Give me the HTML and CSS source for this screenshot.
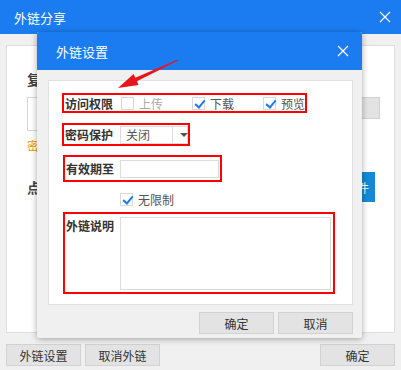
FILE: index.html
```html
<!DOCTYPE html>
<html lang="zh-CN">
<head>
<meta charset="UTF-8">
<title>外链分享</title>
<link rel="stylesheet" href="styles.css">
</head>
<body>
  <div class="win">
    <div class="win-title">
      <span>外链分享</span>
      <svg class="close" width="12" height="12" viewBox="0 0 12 12"><path d="M1 1L11 11M11 1L1 11"/></svg>
    </div>
    <div class="win-body">
      <div class="share-panel">
        <div class="share-label">复制链接</div>
        <div class="link-row">
          <div class="link-input"></div>
          <button class="btn btn-copy">复制链接</button>
        </div>
        <div class="share-tip">密码：无</div>
        <div class="open-row">
          <span class="share-label">点击打开</span>
          <button class="btn-blue">打开文件</button>
        </div>
      </div>
    </div>
    <div class="win-foot">
      <button class="btn">外链设置</button>
      <button class="btn">取消外链</button>
      <span class="spacer"></span>
      <button class="btn">确定</button>
    </div>
  </div>

  <!-- 外链设置 弹窗 -->
  <div class="modal">
    <div class="modal-title">
      <span>外链设置</span>
      <svg class="close" width="12" height="12" viewBox="0 0 12 12"><path d="M1 1L11 11M11 1L1 11"/></svg>
    </div>
    <div class="modal-body">
      <div class="form-panel">
        <div class="mark row-access">
          <span class="label">访问权限</span>
          <span class="chk"></span><span class="opt disabled">上传</span>
          <span class="chk on"></span><span class="opt">下载</span>
          <span class="chk on"></span><span class="opt">预览</span>
        </div>
        <div class="mark row-pwd">
          <span class="label">密码保护</span>
          <div class="select"><span class="select-val">关闭</span><span class="select-btn"></span></div>
        </div>
        <div class="mark row-date">
          <span class="label">有效期至</span>
          <div class="input"></div>
        </div>
        <div class="row-nolimit">
          <span class="chk on"></span><span class="opt">无限制</span>
        </div>
        <div class="mark row-desc">
          <span class="label">外链说明</span>
          <div class="textarea"></div>
        </div>
      </div>
      <div class="modal-foot">
        <button class="btn">确定</button>
        <button class="btn">取消</button>
      </div>
    </div>
  </div>

  <svg class="arrow" width="401" height="370" viewBox="0 0 401 370">
    <polygon points="118,88 133.6,74.1 135.3,77.7 177.8,59.5 178.2,60.5 136.9,81.3 138.6,84.9"/>
  </svg>
</body>
</html>
```

FILE: styles.css
```css
body {
  margin: 0;
  width: 401px;
  height: 370px;
  overflow: hidden;
  position: relative;
  background: #f0f0f0;
  font-family: "Noto Sans CJK SC", "Microsoft YaHei", sans-serif;
  font-size: 12px;
  color: #333;
}

.win {
  display: flex;
  flex-direction: column;
  height: 370px;
}

.win-title {
  height: 34px;
  flex-shrink: 0;
  background: #1b7cf1;
  color: #fff;
  font-size: 13px;
  display: flex;
  align-items: center;
  justify-content: space-between;
  padding: 0 10px 0 14px;
}

.close path {
  stroke: #fff;
  stroke-width: 1.2;
  fill: none;
}

.win-body {
  padding: 11px 6px 0 6px;
}

.share-panel {
  height: 288px;
  box-sizing: border-box;
  background: #fff;
  border: 1px solid #dedede;
  padding: 23px 14px 0 20px;
}

.share-label {
  font-weight: bold;
  font-size: 14px;
  line-height: 20px;
  color: #444;
}

.link-row {
  display: flex;
  margin-top: 8px;
  height: 34px;
}

.link-input {
  flex: 1;
  border: 1px solid #d6d6d6;
}

.btn-copy {
  width: 100px;
  height: 34px;
  text-align: left;
  padding-left: 10px;
  background: linear-gradient(#fafafa, #e2e2e2);
}

.share-tip {
  color: #f39800;
  line-height: 17px;
  margin-top: 6px;
}

.open-row {
  display: flex;
  align-items: center;
  justify-content: space-between;
  margin-top: 18px;
}

.btn-blue {
  height: 30px;
  width: 72px;
  margin-right: 5px;
  border: 0;
  background: #1589d6;
  color: #fff;
  font-family: inherit;
  font-size: 12px;
  text-align: right;
  padding: 0 6px 0 0;
}

.btn {
  width: 75px;
  height: 22px;
  border: 1px solid #d2d2d2;
  background: #e3e3e3;
  color: #333;
  font-family: inherit;
  font-size: 12px;
  padding: 0;
}

.win-foot {
  display: flex;
  gap: 4px;
  padding: 11px 6px 0 6px;
}

.spacer {
  flex: 1;
}

/* 弹窗 */
.modal {
  position: absolute;
  left: 37px;
  top: 32px;
  width: 325px;
  height: 306px;
  background: #f0f0f0;
  box-shadow: 0 1px 6px rgba(0, 0, 0, 0.35);
  border-radius: 2px;
}

.modal-title {
  height: 38px;
  background: #1b7cf1;
  color: #fff;
  font-size: 13px;
  display: flex;
  align-items: center;
  justify-content: space-between;
  padding: 0 13px 0 19px;
  border-radius: 2px 2px 0 0;
}

.modal-body {
  padding: 10px 9px 0 11px;
}

.form-panel {
  height: 225px;
  box-sizing: border-box;
  background: #fff;
  border: 1px solid #e0e0e0;
  padding-top: 12px;
  display: flex;
  flex-direction: column;
  align-items: flex-start;
}

.mark {
  border: 2px solid #f00;
  display: flex;
  align-items: center;
  margin-left: 13px;
  box-sizing: border-box;
  flex-shrink: 0;
}

.label {
  width: 55px;
  padding-left: 1px;
  font-weight: bold;
  color: #333;
  flex-shrink: 0;
  white-space: nowrap;
}

.chk {
  width: 13px;
  height: 13px;
  box-sizing: border-box;
  border: 1px solid #d8d8d8;
  margin-left: 1px;
  position: relative;
  flex-shrink: 0;
}

.chk.on::after {
  content: "";
  position: absolute;
  left: 4px;
  top: 0;
  width: 4px;
  height: 8px;
  border: solid #1b7cf1;
  border-width: 0 2px 2px 0;
  transform: rotate(40deg);
}

.opt {
  margin-left: 5px;
  margin-right: 28px;
  color: #555;
  white-space: nowrap;
  flex-shrink: 0;
}

.opt:last-child {
  margin-right: 0;
}

.opt.disabled {
  color: #aaa;
}

.row-access {
  width: 245px;
  height: 20px;
}

.row-pwd {
  width: 128px;
  height: 23px;
  margin-top: 10px;
}

.select {
  width: 68px;
  height: 18px;
  box-sizing: border-box;
  border: 1px solid #dcdcdc;
  display: flex;
}

.select-val {
  width: 46px;
  padding-left: 5px;
  line-height: 16px;
  color: #555;
  border-right: 1px solid #dcdcdc;
}

.select-btn {
  flex: 1;
  position: relative;
}

.select-btn::after {
  content: "";
  position: absolute;
  left: 7px;
  top: 6px;
  border: 4px solid transparent;
  border-top: 4px solid #555;
  border-bottom: 0;
}

.row-date {
  width: 159px;
  height: 27px;
  margin-top: 9px;
  margin-left: 14px;
}

.row-date .label {
  width: 54px;
}

.input {
  width: 99px;
  height: 18px;
  box-sizing: border-box;
  border: 1px solid #dcdcdc;
}

.row-nolimit {
  display: flex;
  align-items: center;
  margin-top: 11px;
  margin-left: 70px;
  height: 13px;
}

.row-desc {
  width: 272px;
  height: 82px;
  margin-top: 6px;
  margin-left: 14px;
  align-items: flex-start;
  padding-top: 3px;
}

.row-desc .label {
  width: 54px;
}

.textarea {
  width: 211px;
  height: 73px;
  box-sizing: border-box;
  border: 1px solid #dcdcdc;
}

.modal-foot {
  display: flex;
  justify-content: flex-end;
  gap: 4px;
  margin-top: 7px;
}

.arrow {
  position: absolute;
  left: 0;
  top: 0;
  pointer-events: none;
}

.arrow polygon {
  fill: #e8161b;
}
```
